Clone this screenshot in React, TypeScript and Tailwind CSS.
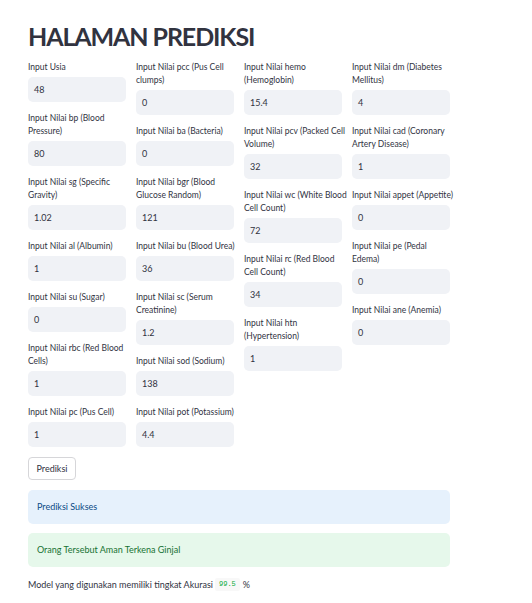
type Field = { label: string[]; value: string };

const columns: Field[][] = [
  [
    { label: ["Input Usia"], value: "48" },
    { label: ["Input Nilai bp (Blood", "Pressure)"], value: "80" },
    { label: ["Input Nilai sg (Specific", "Gravity)"], value: "1.02" },
    { label: ["Input Nilai al (Albumin)"], value: "1" },
    { label: ["Input Nilai su (Sugar)"], value: "0" },
    { label: ["Input Nilai rbc (Red Blood", "Cells)"], value: "1" },
    { label: ["Input Nilai pc (Pus Cell)"], value: "1" },
  ],
  [
    { label: ["Input Nilai pcc (Pus Cell", "clumps)"], value: "0" },
    { label: ["Input Nilai ba (Bacteria)"], value: "0" },
    { label: ["Input Nilai bgr (Blood", "Glucose Random)"], value: "121" },
    { label: ["Input Nilai bu (Blood Urea)"], value: "36" },
    { label: ["Input Nilai sc (Serum", "Creatinine)"], value: "1.2" },
    { label: ["Input Nilai sod (Sodium)"], value: "138" },
    { label: ["Input Nilai pot (Potassium)"], value: "4.4" },
  ],
  [
    { label: ["Input Nilai hemo", "(Hemoglobin)"], value: "15.4" },
    { label: ["Input Nilai pcv (Packed Cell", "Volume)"], value: "32" },
    { label: ["Input Nilai wc (White Blood", "Cell Count)"], value: "72" },
    { label: ["Input Nilai rc (Red Blood", "Cell Count)"], value: "34" },
    { label: ["Input Nilai htn", "(Hypertension)"], value: "1" },
  ],
  [
    { label: ["Input Nilai dm (Diabetes", "Mellitus)"], value: "4" },
    { label: ["Input Nilai cad (Coronary", "Artery Disease)"], value: "1" },
    { label: ["Input Nilai appet (Appetite)"], value: "0" },
    { label: ["Input Nilai pe (Pedal", "Edema)"], value: "0" },
    { label: ["Input Nilai ane (Anemia)"], value: "0" },
  ],
];

function NumberField({ field }: { field: Field }) {
  return (
    <div className="flex flex-col">
      <label className="text-[8.5px] leading-[13px] text-[#31333f] whitespace-nowrap">
        {field.label.map((line, i) => (
          <div key={i}>{line}</div>
        ))}
      </label>
      <div className="mt-[3px] h-[25px] rounded-[5px] bg-[#f0f2f6] px-[6px] flex items-center text-[9px] text-[#31333f]">
        {field.value}
      </div>
    </div>
  );
}

export default function App() {
  return (
    <div
      className="min-h-screen bg-white px-[28px] pt-[20px] text-[#31333f]"
      style={{ fontFamily: "Lato, 'Noto Sans', sans-serif" }}
    >
      <h1 className="text-[25px] leading-[32px] font-bold tracking-[-1.1px]">HALAMAN PREDIKSI</h1>

      <div className="mt-[9px] w-[422px] grid grid-cols-4 gap-x-[10px] items-start">
        {columns.map((col, ci) => (
          <div key={ci} className="flex flex-col gap-[10px]">
            {col.map((f, fi) => (
              <NumberField key={fi} field={f} />
            ))}
          </div>
        ))}
      </div>

      <button className="mt-[10px] h-[23px] w-[48px] rounded-[4px] border border-[#d6d6d9] bg-white text-[9px] text-[#31333f]">
        Prediksi
      </button>

      <div className="mt-[10px] w-[422px] h-[34px] rounded-[5px] bg-[#e6f1fc] px-[9px] flex items-center text-[9px] text-[#0b4a85]">
        Prediksi Sukses
      </div>

      <div className="mt-[9px] w-[422px] h-[34px] rounded-[5px] bg-[#e6f8eb] px-[9px] flex items-center text-[9px] text-[#177233]">
        Orang Tersebut Aman Terkena Ginjal
      </div>

      <p className="mt-[11px] text-[9px] leading-[13px] flex items-center">
        <span>Model yang digunakan memiliki tingkat Akurasi</span>
        <code
          className="ml-[2px] rounded-[2px] bg-[#f8f8f8] px-[4px] text-[7px] text-[#09ab3b]"
          style={{ fontFamily: "'Liberation Mono', monospace" }}
        >
          99.5
        </code>
        <span className="ml-[3px]">%</span>
      </p>
    </div>
  );
}
